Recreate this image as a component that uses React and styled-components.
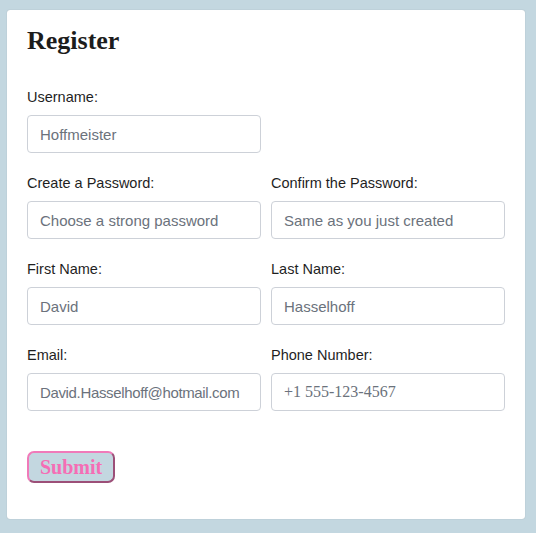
import React from 'react';
import styled, { createGlobalStyle } from 'styled-components';

const GlobalStyle = createGlobalStyle`
    html, body {
        margin : 0;
        padding : 0;
        background : #c3d7e0;
        font-family : "Liberation Sans", Arial, sans-serif;
    }
`

const Page = styled.div`
    padding : 10px 11px 14px 7px;
`

const Card = styled.form`
    background : #ffffff;
    border-radius : 3px;
    box-shadow : 0 0 1px rgba(0, 0, 0, 0.25);
    padding : 16px 20px 36px 20px;
`

const Title = styled.h1`
    margin : 0 0 32px 0;
    font-family : "Liberation Serif", "Times New Roman", serif;
    font-weight : bold;
    font-size : 26px;
    line-height : 30px;
    color : #1c1c1c;
`

const Grid = styled.div`
    display : grid;
    grid-template-columns : 234px 234px;
    column-gap : 10px;
    row-gap : 21px;
`

const Field = styled.div`
    display : flex;
    flex-direction : column;
`

const Label = styled.label`
    font-size : 14.5px;
    line-height : 18px;
    color : #1f1f1f;
    margin-bottom : 9px;
`

const Input = styled.input`
    box-sizing : border-box;
    height : 38px;
    width : 100%;
    border : 1px solid #cdd1d8;
    border-radius : 4px;
    padding : 0 12px;
    font-family : ${p => p.$serif ? '"Liberation Serif", "Times New Roman", serif' : '"Liberation Sans", Arial, sans-serif'};
    font-size : ${p => p.$serif ? '16px' : '15px'};
    letter-spacing : ${p => p.$tight ? '-0.35px' : '0'};
    color : #5f6670;
    background : #ffffff;
    outline : none;

    &::placeholder {
        color : #6b727c;
        opacity : 1;
    }
`

const Submit = styled.button`
    margin-top : 40px;
    box-sizing : border-box;
    height : 32px;
    padding : 3px 11px;
    border : 2px outset #f07ab9;
    border-radius : 7px;
    background : #c3d7e0;
    color : #f56db5;
    font-family : "Liberation Serif", "Times New Roman", serif;
    font-weight : bold;
    font-size : 20px;
    line-height : 22px;
    cursor : pointer;
`

const fields = [
    { id : 'username', label : 'Username:', placeholder : 'Hoffmeister', wide : true },
    { id : 'password', label : 'Create a Password:', placeholder : 'Choose a strong password' },
    { id : 'confirm', label : 'Confirm the Password:', placeholder : 'Same as you just created' },
    { id : 'first', label : 'First Name:', placeholder : 'David' },
    { id : 'last', label : 'Last Name:', placeholder : 'Hasselhoff' },
    { id : 'email', label : 'Email:', placeholder : 'David.Hasselhoff@hotmail.com', tight : true },
    { id : 'phone', label : 'Phone Number:', placeholder : '+1 555-123-4567', serif : true },
];

export default function App(){
    return (
        <Page>
            <GlobalStyle />
            <Card onSubmit={e => e.preventDefault()}>
                <Title>Register</Title>
                <Grid>
                    {fields.map(f => (
                        <React.Fragment key={f.id}>
                            <Field>
                                <Label htmlFor={f.id}>{f.label}</Label>
                                <Input id={f.id} placeholder={f.placeholder} $serif={f.serif} $tight={f.tight} />
                            </Field>
                            {f.wide && <div />}
                        </React.Fragment>
                    ))}
                </Grid>
                <Submit type="submit">Submit</Submit>
            </Card>
        </Page>
    );
};
